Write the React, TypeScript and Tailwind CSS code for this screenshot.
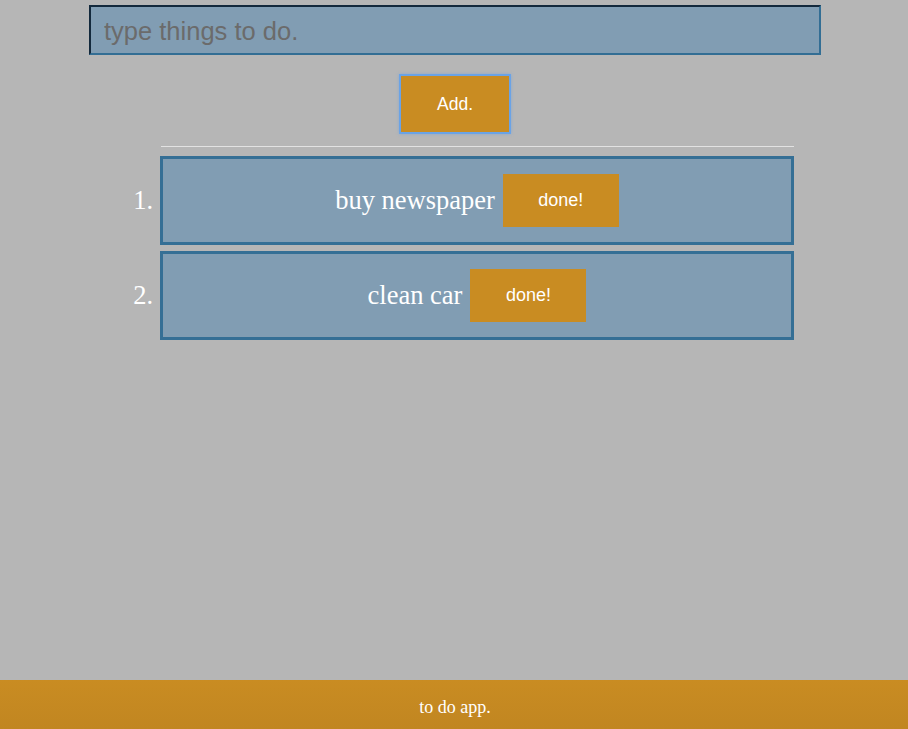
import React, { useState } from 'react';

interface Todo {
  id: number;
  text: string;
}

const START: Todo[] = [
  { id: 1, text: 'buy newspaper' },
  { id: 2, text: 'clean car' },
];

const TodoRow: React.FC<{ todo: Todo; index: number; onDone: (id: number) => void }> = ({ todo, index, onDone }) => (
  <li className="flex items-center">
    <span className="w-[40px] shrink-0 pr-[7px] text-right text-[26.5px] text-white font-['Liberation_Serif',serif]">
      {index + 1}.
    </span>
    <div className="flex h-[89px] flex-1 items-center justify-center gap-2 border-[3px] border-[#356f95] bg-[#819db3]">
      <span className="text-[26.5px] text-white font-['Liberation_Serif',serif]">{todo.text}</span>
      <button
        onClick={() => onDone(todo.id)}
        className="h-[53px] w-[116px] bg-[#c98c22] text-[18px] text-white font-['Liberation_Sans',sans-serif]"
      >
        done!
      </button>
    </div>
  </li>
);

export default function App() {
  const [todos, setTodos] = useState<Todo[]>(START);
  const [draft, setDraft] = useState('');

  const add = () => {
    if (!draft.trim()) return;
    setTodos([...todos, { id: Date.now(), text: draft.trim() }]);
    setDraft('');
  };

  return (
    <div className="flex min-h-screen flex-col bg-[#b6b6b6]">
      <main className="flex flex-col items-center pl-[2px] pt-[5px]">
        <input
          value={draft}
          onChange={(e) => setDraft(e.target.value)}
          placeholder="type things to do."
          className="h-[50px] w-[732px] border-2 border-t-[#13293c] border-l-[#13293c] border-r-[#336e94] border-b-[#336e94] bg-[#819db3] px-[13px] pt-[3px] text-[25.5px] text-[#333] outline-none placeholder:text-[#6b6b6b] font-['Liberation_Sans',sans-serif]"
        />
        <button
          onClick={add}
          className="mt-[21px] h-[56px] w-[108px] bg-[#c98c22] text-[17.5px] text-white ring-2 ring-[#6aa3e6] shadow-[0_0_3px_2px_rgba(106,163,230,0.6)] font-['Liberation_Sans',sans-serif]"
        >
          Add.
        </button>
        <div className="ml-[4px] mt-[14px] w-[674px] pl-[41px]">
          <hr className="border-t border-[#e2e2e2]" />
        </div>
        <ol className="ml-[4px] mt-[9px] flex w-[674px] flex-col gap-[6px]">
          {todos.map((t, i) => (
            <TodoRow key={t.id} todo={t} index={i} onDone={(id) => setTodos(todos.filter((x) => x.id !== id))} />
          ))}
        </ol>
      </main>
      <footer className="mt-auto flex h-[49px] items-center justify-center bg-gradient-to-b from-[#c98c22] to-[#c18621] pl-[2px] pt-[5px] text-[18px] text-white font-['Liberation_Serif',serif]">
        to do app.
      </footer>
    </div>
  );
}
